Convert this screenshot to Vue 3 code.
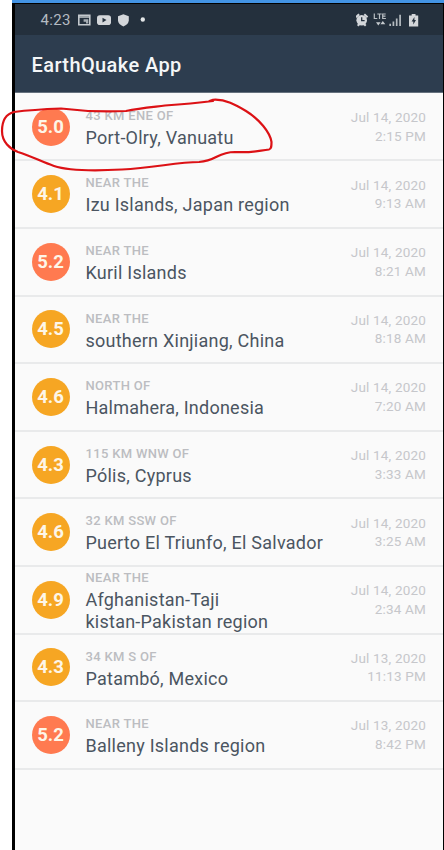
<script setup>
const quakes = [
  { mag: '5.0', offset: '43 KM ENE OF', place: ['Port-Olry, Vanuatu'], date: 'Jul 14, 2020', time: '2:15 PM' },
  { mag: '4.1', offset: 'NEAR THE', place: ['Izu Islands, Japan region'], date: 'Jul 14, 2020', time: '9:13 AM' },
  { mag: '5.2', offset: 'NEAR THE', place: ['Kuril Islands'], date: 'Jul 14, 2020', time: '8:21 AM' },
  { mag: '4.5', offset: 'NEAR THE', place: ['southern Xinjiang, China'], date: 'Jul 14, 2020', time: '8:18 AM' },
  { mag: '4.6', offset: 'NORTH OF', place: ['Halmahera, Indonesia'], date: 'Jul 14, 2020', time: '7:20 AM' },
  { mag: '4.3', offset: '115 KM WNW OF', place: ['Pólis, Cyprus'], date: 'Jul 14, 2020', time: '3:33 AM' },
  { mag: '4.6', offset: '32 KM SSW OF', place: ['Puerto El Triunfo, El Salvador'], date: 'Jul 14, 2020', time: '3:25 AM' },
  { mag: '4.9', offset: 'NEAR THE', place: ['Afghanistan-Taji', 'kistan-Pakistan region'], date: 'Jul 14, 2020', time: '2:34 AM' },
  { mag: '4.3', offset: '34 KM S OF', place: ['Patambó, Mexico'], date: 'Jul 13, 2020', time: '11:13 PM' },
  { mag: '5.2', offset: 'NEAR THE', place: ['Balleny Islands region'], date: 'Jul 13, 2020', time: '8:42 PM' },
]
</script>

<template>
  <div class="page">
    <div class="device">
      <div class="screen">
        <div class="status">
          <span class="clock">4:23</span>
          <svg class="notices" width="72" height="16" viewBox="0 0 72 16">
            <path d="M1.800 3.200h11v9.600h-11z" fill="none" stroke="#c3c8cd" stroke-width="1.600" />
            <path d="M1.800 5h11" stroke="#c3c8cd" stroke-width="1.500" />
            <path d="M6.600 7.300h4.700v4.200H9V9.700H6.600z" fill="#a5acb3" />
            <rect x="20" y="3.200" width="14" height="9.800" rx="2.800" fill="#d3d6da" />
            <path d="M25.500 5.700v4.800l4-2.400z" fill="#24303d" />
            <path d="M46.400 2.200l5.400 2v4.100c0 2.800-2.200 4.900-5.400 6.200-3.200-1.300-5.400-3.400-5.400-6.200V4.200z" fill="#d3d6da" />
            <circle cx="65.800" cy="7.500" r="2.200" fill="#e3e6e8" />
          </svg>
          <svg class="signals" width="66" height="18" viewBox="0 0 66 18">
            <circle cx="5.700" cy="9.200" r="5.300" fill="#d3d6da" />
            <path d="M0 6.200l3.100-3M11.500 6.200l-3.200-3M1.700 14.700l2-2M9.700 14.700l-2-2" stroke="#d3d6da" stroke-width="2" />
            <path d="M5.700 6.200v3.500h2.900" fill="none" stroke="#24303d" stroke-width="1.300" />
            <path d="M18.300 2.500v5h3M21.300 3h4.400M23.500 3v5M29.700 3h-3v4.500h3.200M26.700 5.200h2.800" fill="none" stroke="#b8bec3" stroke-width="1.200" />
            <path d="M20 11.300l2.300 3.200 2.300-3.200zM24.400 13.300l2.400-3.300 2.500 3.300z" fill="#c5cace" />
            <path d="M34.200 12.700v2.300M37.400 10.500v4.500M40.700 7.500v7.500M44.100 3.800v11.200" stroke="#b4babf" stroke-width="1.700" />
            <path d="M55.700 3h3.800v1.600h2.700v10.800H53V4.600h2.700z" fill="#d3d6da" />
            <path d="M58.400 6l-2.800 4.400h1.700v3l2.700-4.300h-1.600z" fill="#24303d" />
          </svg>
        </div>
        <header class="bar">EarthQuake App</header>
        <ul class="list">
          <li v-for="(q, i) in quakes" :key="i" class="row">
            <span class="mag" :class="{ strong: Number(q.mag) >= 5 }">{{ q.mag }}</span>
            <div class="where">
              <div class="offset">{{ q.offset }}</div>
              <div v-for="line in q.place" :key="line" class="place">{{ line }}</div>
            </div>
            <div class="when">
              <div>{{ q.date }}</div>
              <div>{{ q.time }}</div>
            </div>
          </li>
        </ul>
      </div>
    </div>
    <!-- Hand-drawn marker around the first entry -->
    <svg class="marker" width="444" height="200" viewBox="0 0 444 200">
      <path d="M209.500 101L213 99.800C225 98.800 236 105 246 111C259 119 270 132 271.500 142C271.500 146 271.500 149 269 149.500C257 151 252 153 235 152C217 152 217 161 199 162C177 162 154 168 122 169.500C94 171 66 170 54 166C42 162 31 156 18 152C10 149 2 142 2 131C2 120 6 114 14 112C29 110 47 109 61 108.500C81 111 103 112 126 111C140 108 153 107 165 105.500C181 104.500 198 103 213 101" />
    </svg>
  </div>
</template>

<style>
body {
  background: #fff;
}
</style>

<style scoped>
.page {
  position: relative;
  width: 444px;
  height: 850px;
  box-sizing: border-box;
  padding-left: 12px;
  overflow: hidden;
  background: #fff;
  font-family: Roboto, "Liberation Sans", sans-serif;
}
.device {
  height: 850px;
  box-sizing: border-box;
  border-top: 3px solid #4394e5;
  background: #000;
  padding: 1px 1px 0 3px;
}
.screen {
  height: 846px;
  background: #fafafa;
}
.status {
  height: 31px;
  box-sizing: border-box;
  background: #24303d;
  display: flex;
  align-items: center;
  padding: 0 21px 0 25.500px;
}
.clock {
  width: 36.500px;
  color: #b4bbc2;
  font-size: 15px;
  letter-spacing: 0.300px;
}
.signals {
  margin-left: auto;
}
.bar {
  height: 58px;
  box-sizing: border-box;
  background: #2d3d4f;
  border-bottom: 1px solid #66717e;
  padding-left: 16.500px;
  color: #f4f6f7;
  font-size: 20px;
  font-weight: 500;
  line-height: 60px;
  letter-spacing: 0.400px;
}
.list {
  list-style: none;
  margin: 0;
  padding: 0.800px 0 0;
}
.row {
  height: 67.600px;
  box-sizing: border-box;
  border-bottom: 2px solid #e9eaeb;
  display: flex;
  align-items: center;
  padding: 0 17px 0 16.500px;
}
.mag {
  flex: none;
  width: 38px;
  height: 38px;
  border-radius: 50%;
  background: #f6a623;
  color: #fdf6e8;
  font-size: 18.500px;
  font-weight: 700;
  line-height: 38px;
  text-align: center;
}
.mag.strong {
  background: #ff7a50;
}
.where {
  flex: 1;
  margin-left: 16px;
  white-space: nowrap;
}
.offset {
  color: #bcbdc1;
  font-size: 13px;
  font-weight: 500;
  line-height: 22px;
  letter-spacing: 0.320px;
}
.place {
  color: #4b5561;
  font-size: 18px;
  line-height: 21.500px;
  letter-spacing: 0.240px;
}
.when {
  color: #c6c7cb;
  font-size: 13.500px;
  line-height: 18.600px;
  letter-spacing: 0.180px;
  text-align: right;
  white-space: nowrap;
}
.marker {
  position: absolute;
  left: 0;
  top: 0;
  fill: none;
  stroke: #dc1115;
  stroke-width: 2.200;
  stroke-linecap: round;
  stroke-linejoin: round;
}
</style>
